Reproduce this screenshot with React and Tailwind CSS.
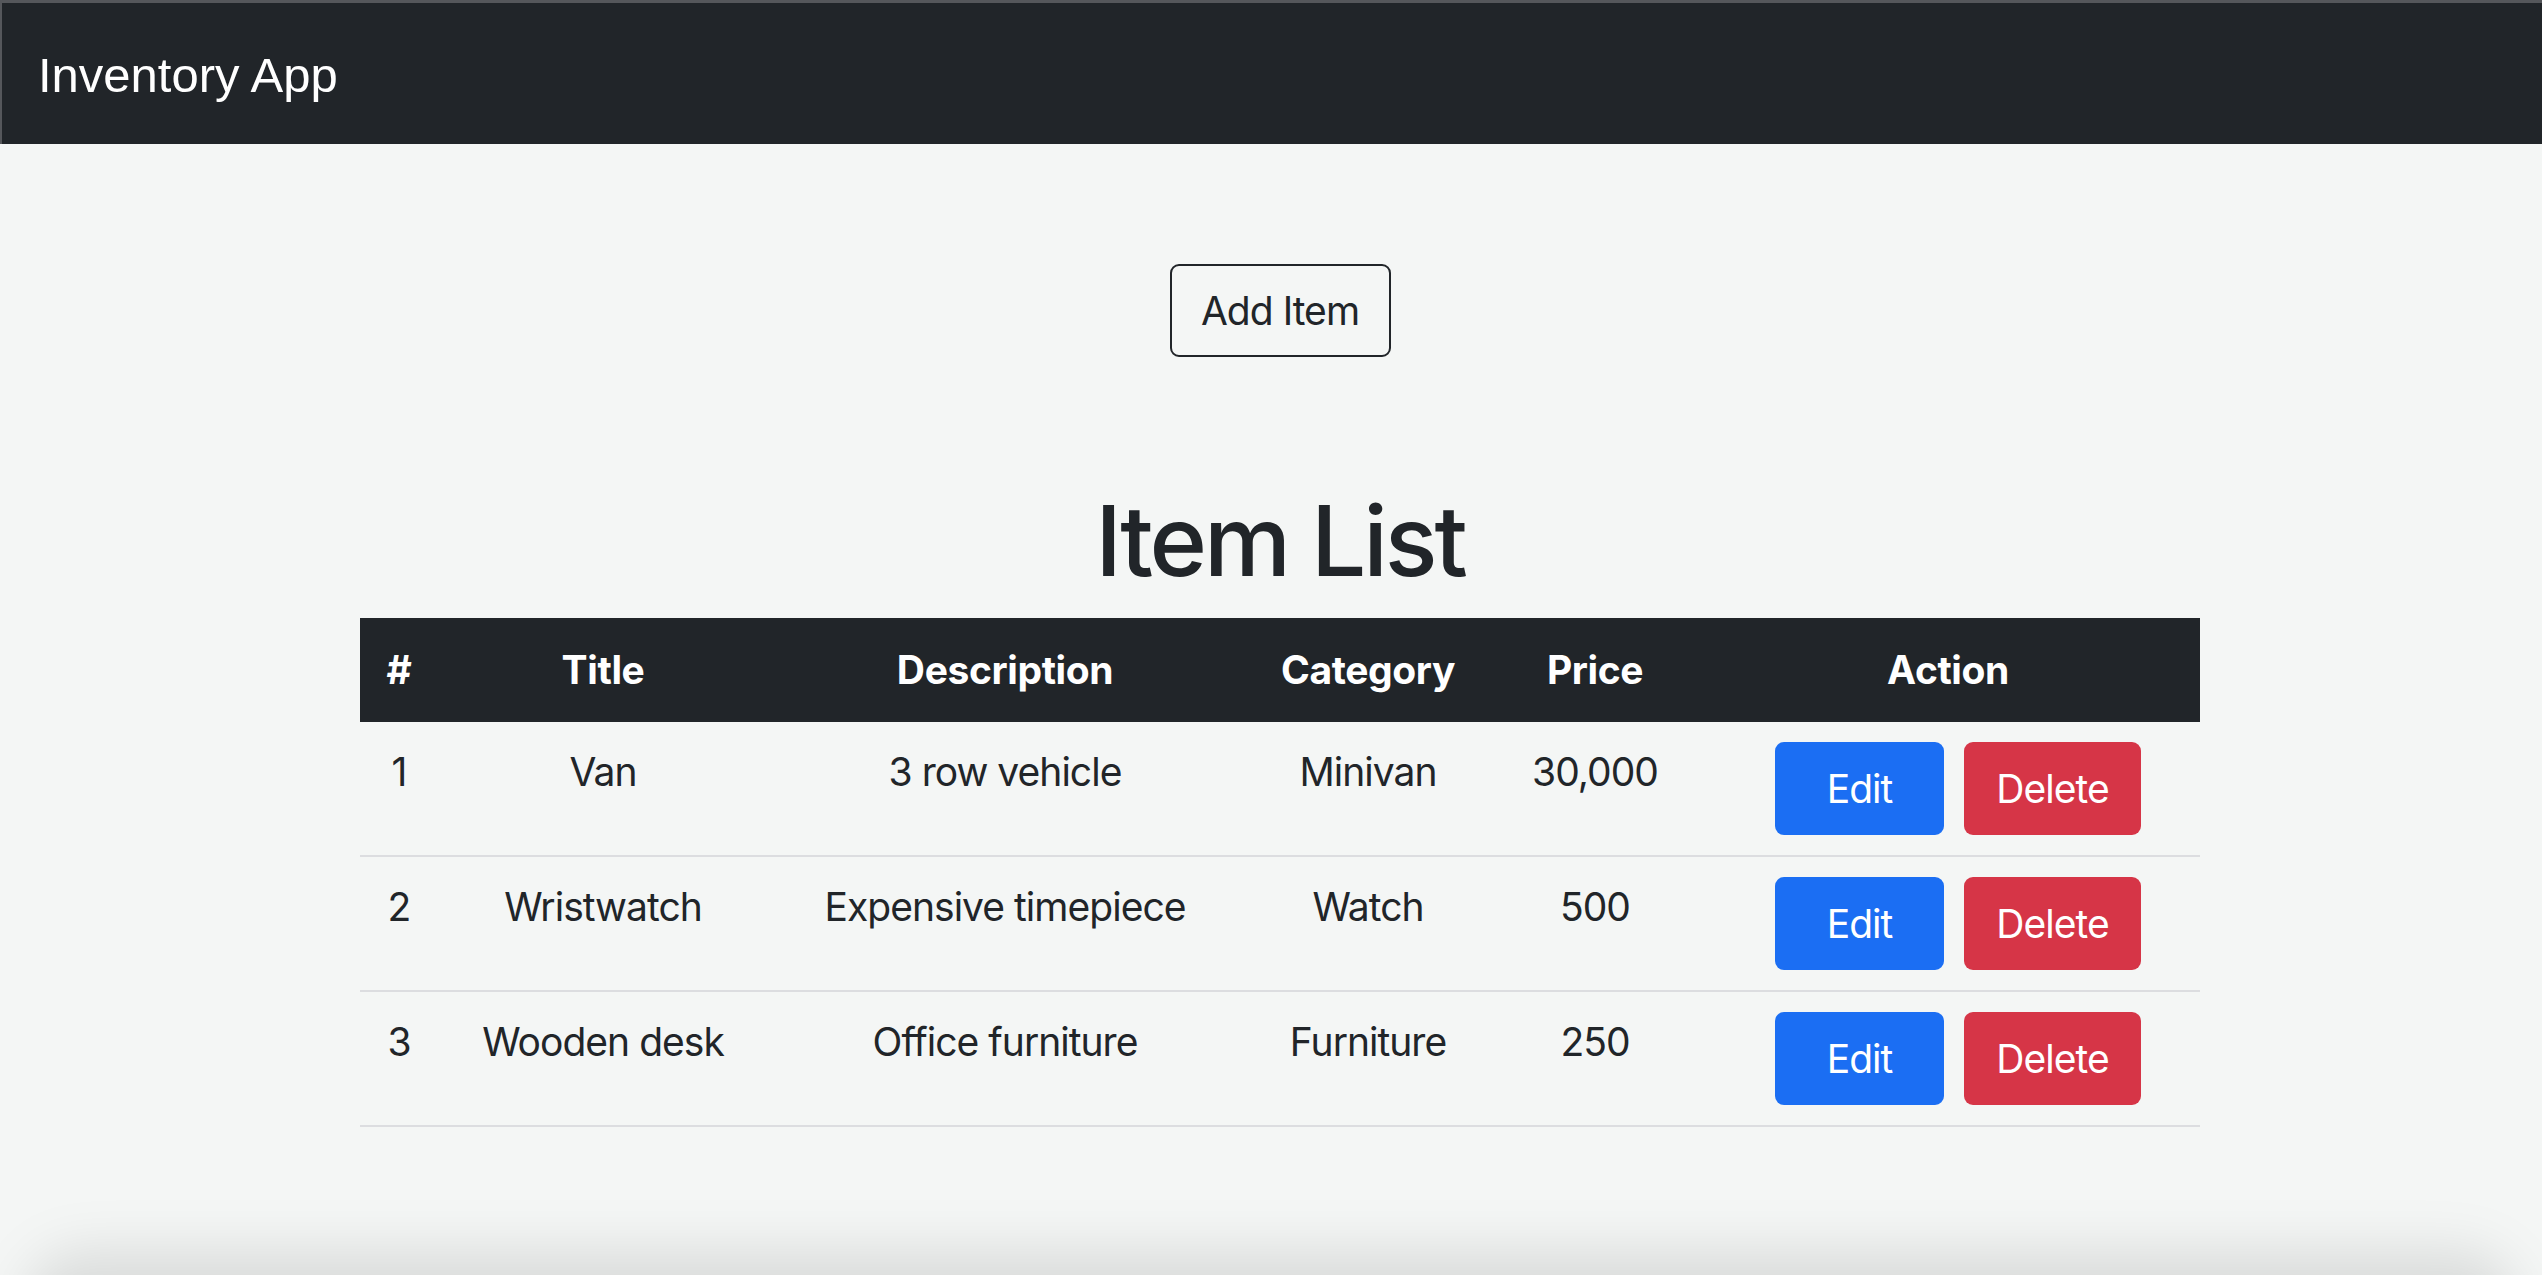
const items = [
  { id: 1, title: "Van", description: "3 row vehicle", category: "Minivan", price: "30,000" },
  { id: 2, title: "Wristwatch", description: "Expensive timepiece", category: "Watch", price: "500" },
  { id: 3, title: "Wooden desk", description: "Office furniture", category: "Furniture", price: "250" },
];

const columns = ["#", "Title", "Description", "Category", "Price", "Action"];

const ItemRow = ({ item }) => (
  <tr className="border-b-2 border-[#dcdde0]">
    <td className="px-[20px] py-[20px] align-top text-center leading-[59px]">{item.id}</td>
    <td className="px-[20px] py-[20px] align-top text-center leading-[59px]">{item.title}</td>
    <td className="px-[20px] py-[20px] align-top text-center leading-[59px]">{item.description}</td>
    <td className="px-[20px] py-[20px] align-top text-center leading-[59px]">{item.category}</td>
    <td className="px-[20px] py-[20px] align-top text-center leading-[59px]">{item.price}</td>
    <td className="px-[20px] py-[20px] align-top">
      <div className="flex justify-center">
        <button className="mx-[20px] w-[169px] h-[93px] rounded-[9px] bg-[#1b6ef3] text-white leading-[59px]">
          Edit
        </button>
        <button className="w-[177px] h-[93px] rounded-[9px] bg-[#d63547] text-white leading-[59px]">
          Delete
        </button>
      </div>
    </td>
  </tr>
);

export default function App() {
  return (
    <div className="relative min-h-screen overflow-hidden bg-[#f4f6f5] border-t-[3px] border-[#55575b] text-[#212529] font-['Inter','Noto_Sans',sans-serif]">
      {/* Navbar */}
      <nav className="h-[141px] bg-[#212529] border-l-2 border-[#55575b] flex items-center pl-[36px] pt-[5px]">
        <span className="font-['Liberation_Sans',Arial,sans-serif] text-[49px] text-white">Inventory App</span>
      </nav>

      <main className="pl-[18px] flex flex-col items-center text-[39px] tracking-[-0.025em]">
        <button className="mt-[120px] h-[93px] w-[221px] border-[2.5px] border-[#212529] rounded-[9px] leading-[59px]">
          Add Item
        </button>

        <h1 className="mt-[125px] mb-[18px] text-[98px] font-medium leading-[118px] tracking-[-0.032em]">
          Item List
        </h1>

        <table className="w-[1840px] table-fixed border-collapse">
          <colgroup>
            <col className="w-[78px]" />
            <col className="w-[330px]" />
            <col className="w-[474px]" />
            <col className="w-[252px]" />
            <col className="w-[202px]" />
            <col className="w-[504px]" />
          </colgroup>
          <thead>
            <tr className="bg-[#212529] text-white h-[104px]">
              {columns.map((c) => (
                <th key={c} className="px-[20px] text-center font-bold tracking-[-0.01em]">
                  {c}
                </th>
              ))}
            </tr>
          </thead>
          <tbody>
            {items.map((item) => (
              <ItemRow key={item.id} item={item} />
            ))}
          </tbody>
        </table>
      </main>

      {/* window shadow at the bottom edge */}
      <div className="pointer-events-none absolute left-0 right-0 bottom-0 h-[70px]">
        <div className="absolute left-[24px] right-[24px] top-[45px] h-[120px] rounded-[60px] bg-black/10 blur-[26px]" />
      </div>
    </div>
  );
}
